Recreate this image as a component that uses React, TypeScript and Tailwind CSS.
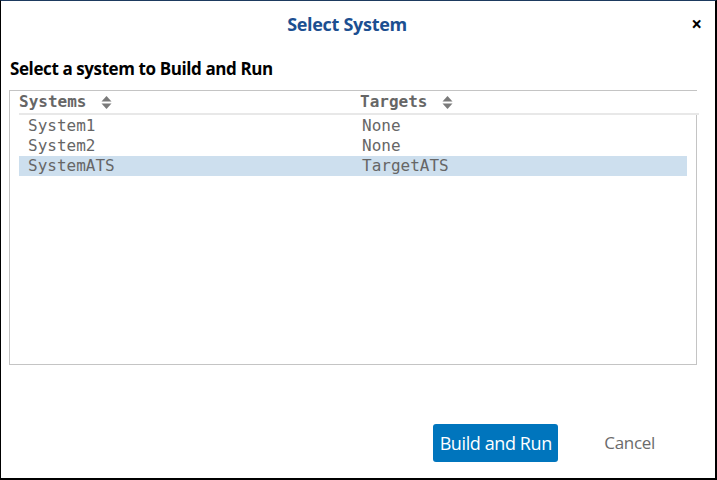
const rows = [
  { system: 'System1', target: 'None', selected: false },
  { system: 'System2', target: 'None', selected: false },
  { system: 'SystemATS', target: 'TargetATS', selected: true },
];

function SortIcon() {
  return (
    <svg width="11" height="13" viewBox="0 0 11 13" className="ml-[15px]">
      <path d="M5.5 0 L10.5 5.5 L0.5 5.5 Z" fill="#7a7a7a" />
      <path d="M5.5 13 L10.5 7.5 L0.5 7.5 Z" fill="#7a7a7a" />
    </svg>
  );
}

export default function App() {
  return (
    <div className="w-[717px] h-[480px] bg-white border-l border-r-2 border-b-2 border-t border-black border-t-[#1d3a5f] flex flex-col font-['Open_Sans',sans-serif]">
      <div className="relative h-[47px] pr-[22px] flex items-center justify-center">
        <h1 className="text-[18px] font-bold text-[#1c4f91] tracking-[-0.3px]">Select System</h1>
        <button className="absolute right-[13px] top-[14px] text-[19px] font-bold text-black leading-none">×</button>
      </div>

      <div className="pl-[9px] h-[42px] flex items-center">
        <h2 className="text-[17px] font-bold text-black tracking-[-0.4px]">Select a system to Build and Run</h2>
      </div>

      <div className="ml-[8px] w-[688px] h-[275px] border-t border-l border-b border-[#c4c4c4] flex flex-col font-['DejaVu_Sans_Mono',monospace] text-[16px]">
        <div className="ml-[9px] mr-[-2px] h-[24px] border-b-2 border-[#e8e8e8] flex items-center font-bold text-[#666666]">
          <div className="w-[341px] flex items-center">
            <span>Systems</span>
            <SortIcon />
          </div>
          <div className="flex items-center">
            <span>Targets</span>
            <SortIcon />
          </div>
        </div>
        <div className="flex-1 ml-[9px] pr-[9px] pt-px border-r border-[#c4c4c4] text-[#666666]">
          {rows.map((r) => (
            <div
              key={r.system}
              className={`h-[20px] flex items-center ${r.selected ? 'bg-[#cddfee]' : ''}`}
            >
              <div className="w-[343px] pl-[9px]">{r.system}</div>
              <div>{r.target}</div>
            </div>
          ))}
        </div>
      </div>

      <div className="flex-1 flex items-end justify-end pb-[16px] pr-[60px] gap-[46px]">
        <button className="h-[38px] w-[125px] rounded-[3px] bg-[#0075bd] text-white text-[18px] tracking-[-0.4px]">
          Build and Run
        </button>
        <button className="h-[38px] text-[17px] text-[#6b6b6b] tracking-[-0.3px]">Cancel</button>
      </div>
    </div>
  );
}
